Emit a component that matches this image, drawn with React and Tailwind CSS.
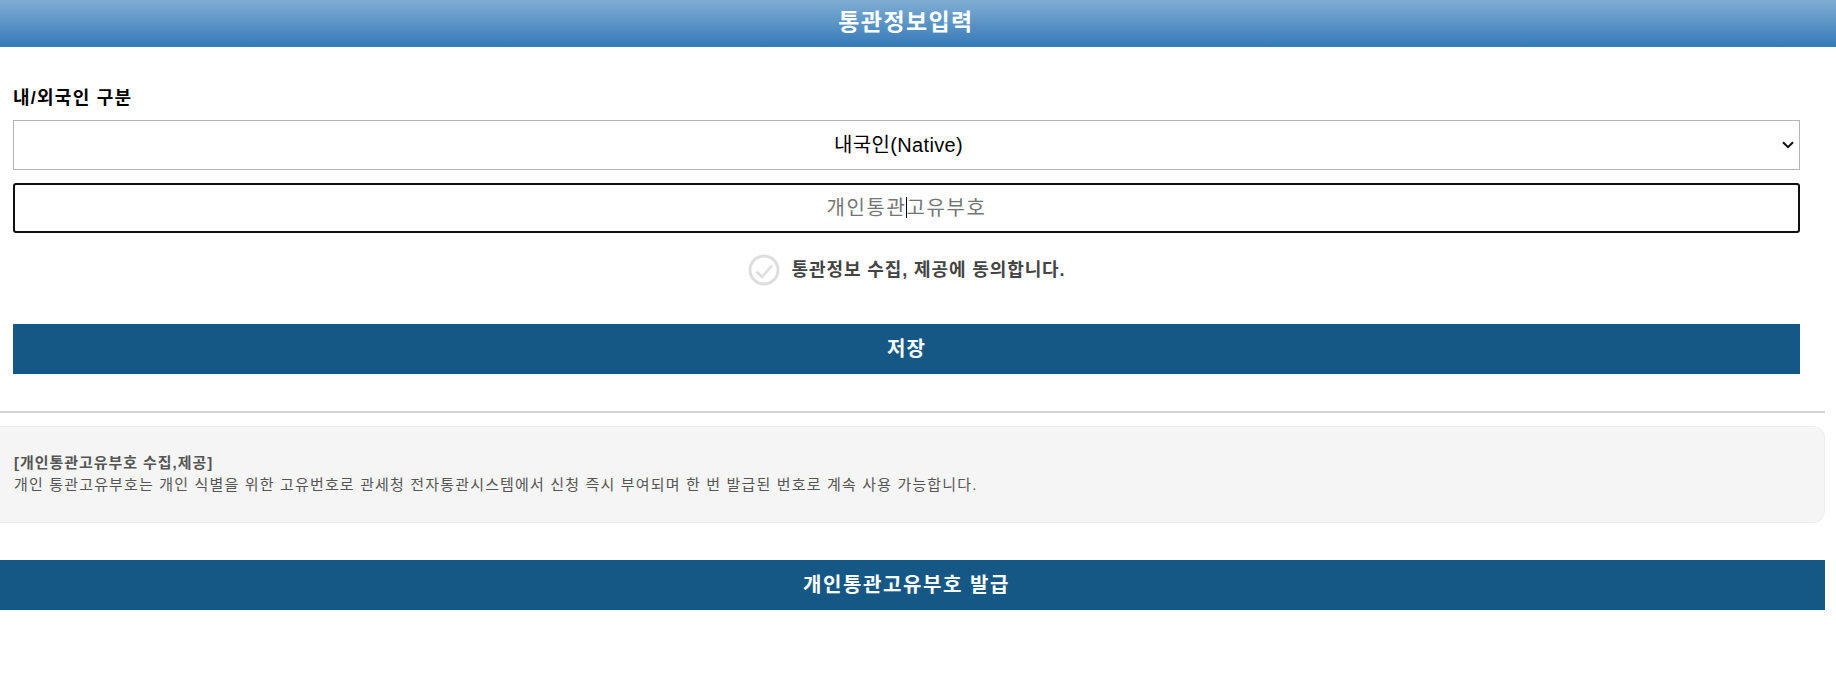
import React from 'react';

const fontStack = '[font-family:"Liberation_Sans","Noto_Sans_CJK_KR",sans-serif]';

const CheckIcon = () => (
    <svg width="32" height="32" viewBox="0 0 32 32" fill="none">
        <circle cx="16" cy="16" r="14" stroke="#dedede" strokeWidth="3" />
        <path d="M8.5 17.5l5.5 5.5 10-11.5" stroke="#dedede" strokeWidth="2.6" />
    </svg>
);

const App = () => {
    return (
        <div className={`${fontStack} min-h-[690px] bg-white`}>
            {/* 상단 타이틀 */}
            <div className="h-[47px] bg-gradient-to-b from-[#7fadd3] to-[#337ab7] pr-[24px] text-center text-[23px] leading-[44px] font-bold tracking-[1.4px] text-white">
                통관정보입력
            </div>

            <div className="w-[1825px]">
                <div className="pl-[13px] pr-[25px]">
                    <div className="pt-[39px] text-[18px] leading-[24px] font-bold tracking-[1.25px] text-black">내/외국인 구분</div>
                    <div className="relative mt-[10px]">
                        <select className="block h-[50px] w-full appearance-none border border-[#b5b5b5] bg-white pr-[16px] text-center text-[20px] tracking-[0.35px] text-black">
                            <option>내국인(Native)</option>
                        </select>
                        <svg className="pointer-events-none absolute top-[21px] right-[6px]" width="12" height="8" viewBox="0 0 12 8" fill="none">
                            <path d="M1 1.2l5 5 5-5" stroke="#111111" strokeWidth="2" />
                        </svg>
                    </div>
                    <div className="relative mt-[13px]">
                        <input
                            type="text"
                            placeholder="개인통관고유부호"
                            className="block h-[50px] w-full rounded-[3px] border-2 border-[#101010] text-center text-[20px] tracking-[0.08em] outline-none placeholder:text-[#757575]"
                        />
                        {/* 커서 */}
                        <div className="absolute top-[14px] left-[893px] h-[21px] w-px bg-black" />
                    </div>
                    <div className="mt-[21px] flex h-[32px] items-center justify-center gap-[12px]">
                        <CheckIcon />
                        <span className="text-[18px] font-bold tracking-[0.05em] text-[#444444]">통관정보 수집, 제공에 동의합니다.</span>
                    </div>
                    <button className="mt-[38px] block h-[50px] w-full bg-[#165885] text-[20px] font-bold tracking-[0.06em] text-white">저장</button>
                </div>

                <div className="mt-[37px] h-[2px] bg-[#d3d3d3]" />

                <div className="mt-[13px] h-[97px] rounded-r-[12px] border border-l-0 border-[#eeeeee] bg-[#f5f5f5] pt-[25px] pl-[14px] text-[15px] leading-[22px] text-[#555555]">
                    <div className="font-bold tracking-[0.95px]">[개인통관고유부호 수집,제공]</div>
                    <div className="tracking-[1.16px]">개인 통관고유부호는 개인 식별을 위한 고유번호로 관세청 전자통관시스템에서 신청 즉시 부여되며 한 번 발급된 번호로 계속 사용 가능합니다.</div>
                </div>

                <button className="mt-[37px] block h-[50px] w-full bg-[#165885] pr-[12px] text-[20px] font-bold tracking-[0.08em] text-white">개인통관고유부호 발급</button>
            </div>
        </div>
    );
};

export default App;
